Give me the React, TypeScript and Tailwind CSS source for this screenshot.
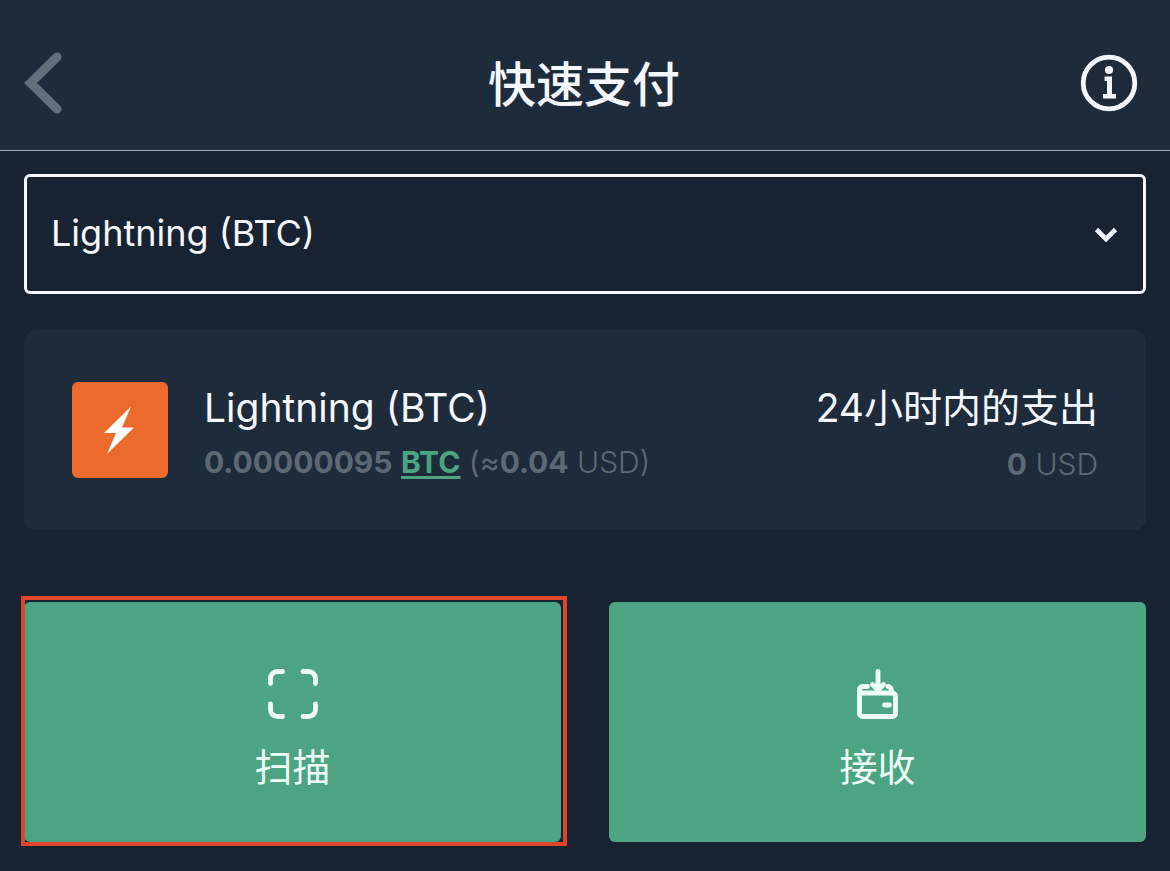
import React, { useState } from "react";

const BackIcon = () => (
  <svg width="38" height="62" viewBox="0 0 38 62" fill="none">
    <path
      d="M33 5L6.500 31L33 57"
      stroke="#62707c"
      strokeWidth="9"
      strokeLinecap="round"
      strokeLinejoin="miter"
    />
  </svg>
);

const InfoIcon = () => (
  <svg width="58" height="58" viewBox="0 0 58 58" fill="none">
    <circle cx="29" cy="29" r="25.800" stroke="#f5f8ff" strokeWidth="4.800" />
    <circle cx="29" cy="16" r="4.100" fill="#f5f8ff" />
    <path d="M24.500 22.500H32V40H36V44.500H23V40H27V27H24.500Z" fill="#f5f8ff" />
  </svg>
);

const ChevronIcon = () => (
  <svg width="24" height="18" viewBox="0 0 24 18" fill="none">
    <path d="M2.500 4.500L12 14L21.500 4.500" stroke="#f5f8ff" strokeWidth="4.600" />
  </svg>
);

const BoltIcon = () => (
  <svg width="96" height="96" viewBox="0 0 96 96">
    <path d="M59 24.500L32 51H44L35 72L62 45.500H50Z" fill="#fff" />
  </svg>
);

const ScanIcon = () => (
  <svg width="50" height="50" viewBox="0 0 50 50" fill="none">
    <path
      d="M2.500 14.500V9.500A7 7 0 0 1 9.500 2.500H14.500M35 2.500H40.500A7 7 0 0 1 47.500 9.500V14.500M47.500 35V40.500A7 7 0 0 1 40.500 47.500H35M14.500 47.500H9.500A7 7 0 0 1 2.500 40.500V35"
      stroke="#effff8"
      strokeWidth="4.800"
      strokeLinecap="round"
    />
  </svg>
);

const ReceiveIcon = () => (
  <svg width="42" height="50" viewBox="0 0 42 50" fill="none">
    <g
      stroke="#effff8"
      strokeWidth="4.800"
      strokeLinecap="round"
      strokeLinejoin="round"
    >
      <path d="M10.500 17.500H5.500A3 3 0 0 0 2.500 20.500V44.500A3 3 0 0 0 5.500 47.500H35.500A3 3 0 0 0 38.500 44.500V27A3 3 0 0 0 35.500 24H3" />
      <path d="M31 17.500A4 4 0 0 1 34.500 21.500V24" />
      <path d="M21 2.500V20M15.500 15.500L21 21L26.500 15.500" />
      <path d="M27.500 36H32.500" />
    </g>
  </svg>
);

const QuickPay = () => {
  const [account, setAccount] = useState("lightning");

  return (
    <div className="w-full min-h-screen bg-[#172331] text-[#f5f8ff] font-['Inter','Noto_Sans_CJK_SC',sans-serif]">
      {/* header */}
      <header className="w-full h-[151px] pt-4 pl-6 pr-8 flex justify-between items-center bg-[#1e2b3b] border-b border-[#a3abb5]">
        <button aria-label="返回" className="w-16">
          <BackIcon />
        </button>
        <h1 className="pt-1 text-[48px] leading-[64px] font-medium">快速支付</h1>
        <button aria-label="信息">
          <InfoIcon />
        </button>
      </header>

      <main className="w-full px-6 pt-[23px] pb-6 flex flex-col">
        {/* account select */}
        <div className="w-full grid items-center">
          <select
            aria-label="账户"
            value={account}
            onChange={(e) => setAccount(e.target.value)}
            className="col-start-1 row-start-1 w-full h-[120px] px-6 pb-0.5 appearance-none bg-transparent border-3 border-[#f5f8ff] rounded-[6px] text-[36px] outline-none"
          >
            <option value="lightning">Lightning (BTC)</option>
          </select>
          <span className="col-start-1 row-start-1 justify-self-end mr-7 pointer-events-none">
            <ChevronIcon />
          </span>
        </div>

        {/* balance card */}
        <section className="w-full h-[200px] mt-9 px-12 flex items-center bg-[#1e2b3b] rounded-[12px]">
          <div className="size-24 shrink-0 bg-[#ec6a2c] rounded-[6px]">
            <BoltIcon />
          </div>
          <div className="ml-9 pt-2 flex-1">
            <h2 className="text-[39px] leading-[56px]">Lightning (BTC)</h2>
            <p className="text-[30px] leading-[52px] text-[#5c6973]">
              <b className="font-bold">0.00000095</b>{" "}
              <a
                href="#btc"
                className="font-bold text-[#4ca483] underline decoration-3 underline-offset-3"
              >
                BTC
              </a>{" "}
              (≈<b className="font-bold">0.04</b>
              <span className="font-light"> USD)</span>
            </p>
          </div>
          <div className="pt-3 text-right">
            <h2 className="text-[39px] leading-[56px]">24小时内的支出</h2>
            <p className="text-[30px] leading-[56px] font-light text-[#5c6973]">
              <b className="font-bold">0</b> USD
            </p>
          </div>
        </section>

        {/* scan + receive buttons */}
        <div className="w-full mt-[72px] grid grid-cols-2 gap-12">
          <div className="relative">
            <button className="w-full h-[240px] pt-5 flex flex-col justify-center items-center gap-5 bg-[#4ca483] rounded-[6px] text-[#effff8]">
              <ScanIcon />
              <span className="text-[38px] leading-[56px]">扫描</span>
            </button>
            {/* highlight frame */}
            <div className="absolute -left-[3px] -right-1.5 -top-1.5 -bottom-1 border-4 border-[#e0452a] pointer-events-none" />
          </div>
          <button className="w-full h-[240px] pt-5 flex flex-col justify-center items-center gap-5 bg-[#4ca483] rounded-[6px] text-[#effff8]">
            <ReceiveIcon />
            <span className="text-[38px] leading-[56px]">接收</span>
          </button>
        </div>
      </main>
    </div>
  );
};

export default QuickPay;
